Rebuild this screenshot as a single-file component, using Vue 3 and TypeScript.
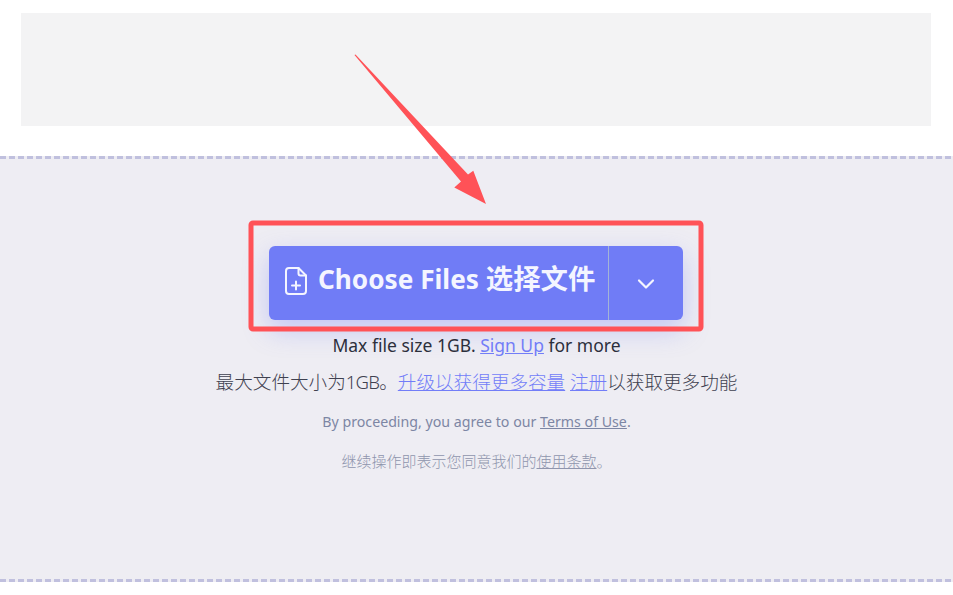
<script setup lang="ts">
</script>

<template>
  <div class="page">
    <div class="ad"></div>
    <section class="drop">
      <div class="btn-group">
        <button class="choose" type="button">
          <svg class="file-icon" width="22" height="28" viewBox="0 0 22 28" fill="none" stroke="currentColor" stroke-width="2" stroke-linecap="round" stroke-linejoin="round">
            <path d="M13.5 1H4A3 3 0 0 0 1 4v20a3 3 0 0 0 3 3h14a3 3 0 0 0 3-3V8.5z" />
            <path d="M13.5 1v5.5a2 2 0 0 0 2 2H21" />
            <path d="M11 14.5v8M7 18.5h8" />
          </svg>
          <span class="label">Choose Files <span class="label-cn">选择文件</span></span>
        </button>
        <button class="more" type="button" aria-label="more">
          <svg width="18" height="12" viewBox="0 0 18 12" fill="none" stroke="currentColor" stroke-width="2.2" stroke-linecap="round" stroke-linejoin="round">
            <path d="M2 2.5l7 7 7-7" />
          </svg>
        </button>
      </div>
      <p class="line en">Max file size 1GB. <a>Sign Up</a> for more</p>
      <p class="line cn">最大文件大小为<span class="tight">1GB</span>。<a>升级以获得更多容量</a> <a>注册</a>以获取更多功能</p>
      <p class="terms first">By proceeding, you agree to our <a>Terms of Use</a>.</p>
      <p class="terms second">继续操作即表示您同意我们的<a>使用条款</a>。</p>
    </section>

    <svg class="annotation" width="953" height="595" viewBox="0 0 953 595">
      <polygon points="354.5,55 355.5,54.5 468,174.5 473.3,170.7 486,204 454.3,187.5 461,181.5" fill="#ff5257" />
      <rect x="251" y="223" width="450" height="106" rx="2" fill="none" stroke="#ff5257" stroke-width="5" />
    </svg>
  </div>
</template>

<style scoped>
.page {
  position: relative;
  box-sizing: border-box;
  width: 953px;
  height: 595px;
  padding-top: 13px;
  overflow: hidden;
  background: #fff;
  font-family: "Noto Sans", "Noto Sans CJK SC", sans-serif;
}
.ad {
  height: 113px;
  margin: 0 22px 0 21px;
  background: #f3f3f4;
}
.drop {
  box-sizing: border-box;
  height: 426px;
  margin-top: 30px;
  padding-top: 90px;
  background-color: #eeedf3;
  display: flex;
  flex-direction: column;
  align-items: center;
  background-image:
    repeating-linear-gradient(90deg, #c0c0de 0 6px, transparent 6px 9px),
    repeating-linear-gradient(90deg, #c0c0de 0 6px, transparent 6px 9px);
  background-size: 100% 3px;
  background-position: 0 0, 0 100%;
  background-repeat: no-repeat;
}
.btn-group {
  display: flex;
  width: 414px;
  height: 74px;
  margin-right: 1px;
  border-radius: 6px;
  background: #707cf6;
  color: #f4f5ff;
  box-shadow: 0 10px 26px rgba(112, 124, 246, 0.34);
}
.btn-group button {
  border: 0;
  background: transparent;
  color: inherit;
  padding: 0;
  display: flex;
  align-items: center;
  font: inherit;
}
.btn-group .choose {
  box-sizing: content-box;
  width: 323px;
  padding-left: 16px;
  padding-bottom: 4px;
  height: 70px;
  gap: 11px;
  font-size: 26.2px;
  font-weight: 700;
  white-space: nowrap;
  border-right: 1px solid #a3b4d6;
}
.label {
  line-height: 1;
  padding-bottom: 4px;
}
.label-cn {
  font-size: 27.4px;
}
.file-icon {
  flex: none;
}
.btn-group .more {
  flex: 1;
  justify-content: center;
  padding-top: 1px;
}
.line {
  margin: 0;
  text-align: center;
  white-space: nowrap;
  color: #2c2f3c;
  font-size: 17.5px;
  line-height: 22px;
}
.line a {
  color: #727df8;
  text-decoration: underline;
}
.en {
  margin-top: 14px;
}
.cn {
  margin-top: 15px;
  color: #3f4150;
  font-size: 18.6px;
  font-weight: 300;
}
.tight {
  letter-spacing: -0.8px;
}
.terms {
  margin: 0;
  white-space: nowrap;
  font-size: 14.2px;
  line-height: 18px;
  color: #7d86a4;
}
.terms a {
  text-decoration: underline;
}
.first {
  margin-top: 20px;
}
.second {
  margin-top: 21px;
  color: #8f95ad;
  font-size: 15px;
  font-weight: 300;
}
.annotation {
  position: absolute;
  left: 0;
  top: 0;
  pointer-events: none;
}
</style>
